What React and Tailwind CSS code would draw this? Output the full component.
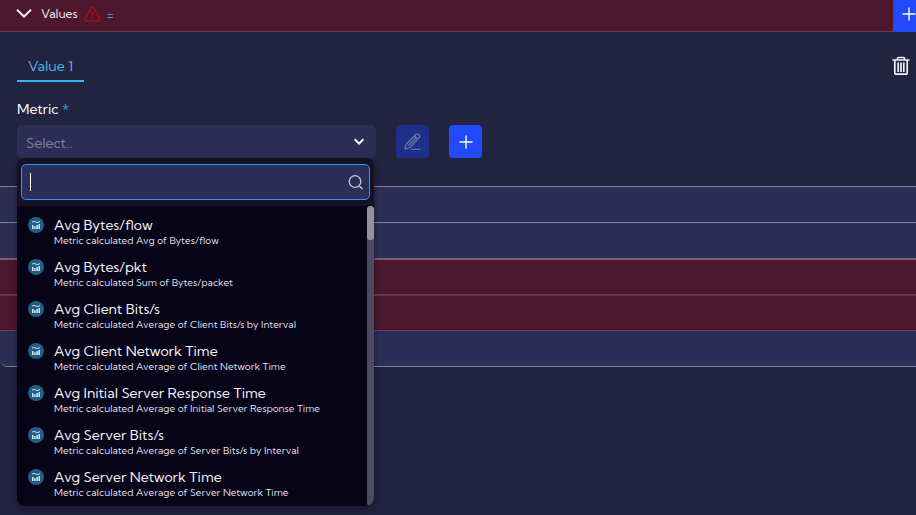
import React from "react";

const metrics = [
  ["Avg Bytes/flow", "Metric calculated Avg of Bytes/flow"],
  ["Avg Bytes/pkt", "Metric calculated Sum of Bytes/packet"],
  ["Avg Client Bits/s", "Metric calculated Average of Client Bits/s by Interval"],
  ["Avg Client Network Time", "Metric calculated Average of Client Network Time"],
  ["Avg Initial Server Response Time", "Metric calculated Average of Initial Server Response Time"],
  ["Avg Server Bits/s", "Metric calculated Average of Server Bits/s by Interval"],
  ["Avg Server Network Time", "Metric calculated Average of Server Network Time"],
];

function Stroke({ className, children, ...rest }) {
  return (
    <svg className={className} fill="none" stroke="currentColor" aria-hidden="true" {...rest}>
      {children}
    </svg>
  );
}

function Plus() {
  return (
    <Stroke className="size-[14px] shrink-0" viewBox="0 0 14 14" strokeWidth="1.4">
      <path d="M7 .5v13M.5 7h13" />
    </Stroke>
  );
}

function MetricIcon() {
  return (
    <svg className="size-4 shrink-0" viewBox="0 0 16 16" aria-hidden="true">
      <circle cx="8" cy="8" r="8" fill="#205f85" />
      <path d="M4 8h1.500v4H4zM6.200 9.200h1.500V12H6.200zM8.400 8h1.500v4H8.400zM10.500 7h1.500v5h-1.500z" fill="#d6e6f0" />
      <path d="M4 5.200Q5.800 3.600 7.500 5T12 4.600" fill="none" stroke="#d6e6f0" strokeWidth="1" />
    </svg>
  );
}

function Header() {
  return (
    <header className="flex h-8 items-stretch border-b border-[#6b3a54] bg-[#4d182e]">
      <button type="button" className="flex flex-1 items-center pb-1 pl-4 text-[12px] text-[#f0eaf0]">
        <Stroke className="h-[9px] w-4" viewBox="0 0 16 9" strokeWidth="2">
          <path d="M1 .8l7 6.700L15 .8" />
        </Stroke>
        <span className="ml-[9px]">Values</span>
        <Stroke className="ml-[6px] h-4 w-[17px] text-[#a80d14]" viewBox="0 0 17 16" strokeWidth="1.500">
          <path d="M7.500 1.500Q8.500.2 9.500 1.500l6.500 11.700q.5 1.700-1 1.800H2q-1.500-.1-1-1.800z" />
          <path d="M8.500 5.500v4.300M8.500 11.300v1.500" strokeWidth="1.700" />
        </Stroke>
        <span className="ml-[6px] pt-[3px] text-[#4aa3dc]">=</span>
      </button>
      <button type="button" aria-label="Add value" className="-mb-px flex w-[23px] items-center overflow-hidden bg-[#234af8] pb-1 pl-[9px] text-white">
        <Plus />
      </button>
    </header>
  );
}

function Dropdown() {
  return (
    <div className="absolute left-0 top-full z-10 w-[357px] overflow-hidden rounded-lg bg-[#151223] shadow-[0_3px_8px_rgba(0,0,0,0.4)]">
      <div className="px-1 py-[6px]">
        <div className="flex h-9 items-center rounded-[5px] border border-[#438cf0] bg-[#2d2e55] pr-[6px] shadow-[inset_0_0_0_1px_#183474]">
          <div className="ml-2 h-[18px] w-px bg-white" />
          <input aria-label="Search metrics" className="h-full min-w-0 flex-1 bg-transparent px-1 text-[14px] text-white outline-none" />
          <Stroke className="size-4 text-[#c5c6df]" viewBox="0 0 16 16" strokeWidth="1.300">
            <circle cx="8" cy="7.500" r="5.800" />
            <path d="M12 11.800l3.500 3.200" />
          </Stroke>
        </div>
      </div>
      <div className="flex h-[300px] bg-[#070417]">
        <ul className="min-w-0 flex-1 overflow-hidden pt-[6px]">
          {metrics.map(([title, detail]) => (
            <li key={title}>
              <button type="button" className="flex w-full items-start gap-[10px] whitespace-nowrap py-[5px] pl-[11px] text-left">
                <MetricIcon />
                <span className="block">
                  <span className="block text-[14px] leading-4 text-[#f3f1f8]">{title}</span>
                  <span className="block text-[10px] leading-4 text-[#dedce6]">{detail}</span>
                </span>
              </button>
            </li>
          ))}
        </ul>
        <div className="w-[7px] rounded-sm bg-[#4c4b62]">
          <div className="h-[34px] rounded-sm bg-[#92919e]" />
        </div>
      </div>
    </div>
  );
}

export default function App() {
  return (
    <div className="min-h-screen overflow-hidden bg-[#222340] font-['Kumbh_Sans',Lato,sans-serif] text-white">
      <Header />
      <main className="pb-[28px] pl-[17px] pr-[6px]">
        <div className="flex items-center justify-between pt-[18px]">
          <button type="button" className="h-8 border-b-2 border-[#37b7ef] px-[11px] pt-[2px] text-[14px] text-[#45b5e8]">
            Value 1
          </button>
          <button type="button" aria-label="Delete value" className="text-[#f0eff6]">
            <Stroke className="h-5 w-[18px]" viewBox="0 0 18 20" strokeWidth="1.700">
              <path d="M.5 4h17M5.500 3.800V2.300q0-.8 1-.8h5q1 0 1 .8v1.500M2.800 4v12.500q0 1.700 1.700 1.700h9q1.700 0 1.700-1.700V4M6.200 6.500V16M9 6.500V16M11.800 6.500V16" />
            </Stroke>
          </button>
        </div>
        <label htmlFor="metric" className="mt-[17px] block text-[14px] leading-5">
          Metric <span className="text-[#35a4d8]">*</span>
        </label>
        <div className="mt-[6px] flex gap-5">
          <div className="relative w-[359px]">
            <button id="metric" type="button" aria-haspopup="listbox" aria-expanded="true" className="flex h-[33px] w-full items-center justify-between rounded-[5px] bg-[#2d2e55] pl-[9px] pr-3 text-[14px] text-[#7d7e9b]">
              <span className="pt-1">Select..</span>
              <Stroke className="h-[7px] w-[10px] text-white" viewBox="0 0 10 7" strokeWidth="2">
                <path d="M.7 1.300L5 5.600 9.300 1.300" />
              </Stroke>
            </button>
            <Dropdown />
          </div>
          <button type="button" disabled aria-label="Edit metric" className="flex size-[33px] items-center justify-center rounded bg-[#1d2f87] text-[#7380b2]">
            <Stroke className="size-[17px]" viewBox="0 0 17 17" strokeWidth="1.100" strokeLinejoin="round">
              <path d="M1 16l1-4.500L11.800 1.500q1.700-1.200 3.200.2t.2 3L5.500 14.800zM10.500 3l3.300 3.300M4.500 12.500l7.500-7.500M7 16.200h9.500" />
            </Stroke>
          </button>
          <button type="button" aria-label="Add metric" className="flex size-[33px] items-center justify-center rounded bg-[#234af8] text-white">
            <Plus />
          </button>
        </div>
      </main>
      <section className="overflow-hidden rounded-bl-lg border-b border-[#83829f]">
        <div className="h-9 border-t border-[#83829f] bg-[#2d2e55]" />
        <div className="h-9 border-t border-[#83829f] bg-[#2d2e55]" />
        <div className="h-9 border-t-2 border-[#7b6079] bg-[#4d182e]" />
        <div className="h-9 border-t-2 border-[#6b3850] bg-[#4d182e]" />
        <div className="h-9 border-t border-[#6b3f61] bg-[#2d2e55]" />
      </section>
    </div>
  );
}
